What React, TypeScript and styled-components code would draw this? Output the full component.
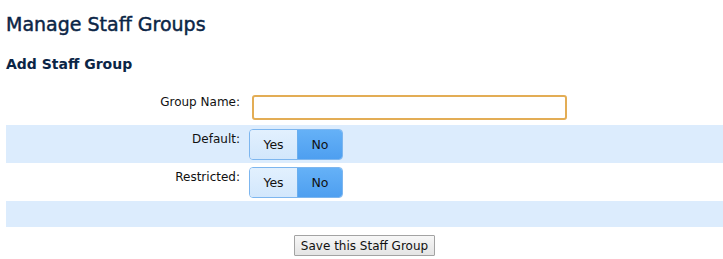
import React from "react";
import styled, { createGlobalStyle } from "styled-components";

const GlobalStyle = createGlobalStyle`
  body {
    margin: 0;
    padding: 6px 0 0 6px;
    background: #ffffff;
    font-family: "DejaVu Sans", Verdana, sans-serif;
  }
`;

const Title = styled.h1`
  margin: 5px 0 0 0;
  font-size: 19px;
  font-weight: normal;
  -webkit-text-stroke: 0.45px #0b2546;
  color: #0b2546;
  line-height: 26px;
`;

const SubTitle = styled.h2`
  margin: 17px 0 0 0;
  font-size: 14px;
  font-weight: bold;
  color: #0b2546;
  line-height: 20px;
`;

const Form = styled.div`
  margin-top: 14px;
  display: flex;
  flex-direction: column;
`;

const Row = styled.div<{ $shaded?: boolean; $height: number }>`
  display: flex;
  align-items: flex-start;
  height: ${(p) => p.$height}px;
  box-sizing: border-box;
  padding-top: 4px;
  background: ${(p) => (p.$shaded ? "#dcecfd" : "transparent")};
`;

const Label = styled.div`
  flex: 0 0 234px;
  padding-right: 9px;
  text-align: right;
  font-size: 12px;
  color: #111;
  line-height: 16px;
  padding-top: 2px;
`;

const TextInput = styled.input`
  flex: 0 0 315px;
  height: 25px;
  box-sizing: border-box;
  margin-left: 3px;
  margin-top: 3px;
  border: 2px solid #e3ad55;
  border-radius: 3px;
  outline: none;
  font-family: inherit;
  font-size: 12px;
  padding: 0 3px;
`;

const Toggle = styled.div`
  display: flex;
  height: 31px;
  box-sizing: border-box;
  border: 1px solid #7db6ef;
  border-radius: 4px;
  overflow: hidden;
`;

const ToggleOption = styled.div<{ $active?: boolean }>`
  width: ${(p) => (p.$active ? 44 : 47)}px;
  display: flex;
  align-items: center;
  justify-content: center;
  font-size: 12.5px;
  color: #111;
  background: ${(p) =>
    p.$active
      ? "linear-gradient(#65b1f7, #4e9ff0)"
      : "linear-gradient(#e2f0fe, #d2e7fc)"};
  border-left: ${(p) => (p.$active ? "1px solid #6aaeee" : "none")};
`;

const Actions = styled.div`
  display: flex;
  justify-content: center;
  padding-top: 8px;
`;

const SaveButton = styled.button`
  height: 21px;
  padding: 0 6px;
  font-family: inherit;
  font-size: 12px;
  color: #111;
  background: linear-gradient(#f7f7f7, #e4e4e4);
  border: 1px solid #a3a3a3;
  border-radius: 1px;
`;

const YesNo = () => (
  <Toggle>
    <ToggleOption>Yes</ToggleOption>
    <ToggleOption $active>No</ToggleOption>
  </Toggle>
);

export default function App() {
  return (
    <>
      <GlobalStyle />
      <Title>Manage Staff Groups</Title>
      <SubTitle>Add Staff Group</SubTitle>
      <Form>
        <Row $height={37}>
          <Label>Group Name:</Label>
          <TextInput autoFocus />
        </Row>
        <Row $shaded $height={38}>
          <Label>Default:</Label>
          <YesNo />
        </Row>
        <Row $height={38}>
          <Label>Restricted:</Label>
          <YesNo />
        </Row>
        <Row $shaded $height={26} />
      </Form>
      <Actions>
        <SaveButton>Save this Staff Group</SaveButton>
      </Actions>
    </>
  );
}
